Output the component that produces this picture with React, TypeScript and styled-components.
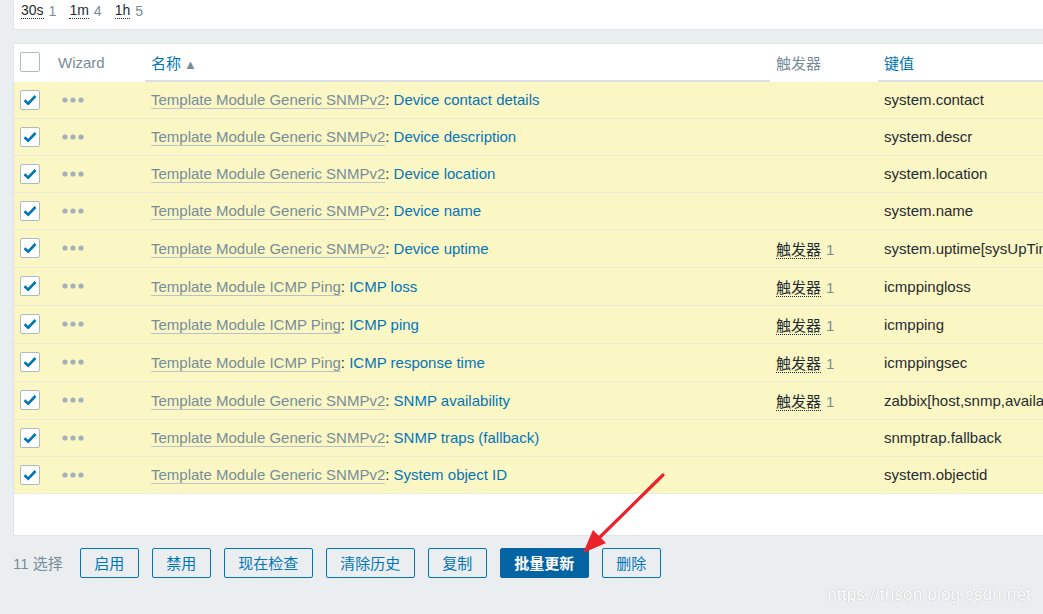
import styled, { createGlobalStyle } from 'styled-components';

const GlobalStyle = createGlobalStyle`
  html, body {
    margin: 0;
    padding: 0;
    background: #ebeef0;
  }
  body {
    font-family: "Liberation Sans", Arial, "Noto Sans CJK SC", sans-serif;
    font-size: 15px;
    color: #1f2c33;
  }
`;

type Item = {
  template: string;
  name: string;
  trigger?: number;
  key: string;
};

const items: Item[] = [
  { template: 'Template Module Generic SNMPv2', name: 'Device contact details', key: 'system.contact' },
  { template: 'Template Module Generic SNMPv2', name: 'Device description', key: 'system.descr' },
  { template: 'Template Module Generic SNMPv2', name: 'Device location', key: 'system.location' },
  { template: 'Template Module Generic SNMPv2', name: 'Device name', key: 'system.name' },
  { template: 'Template Module Generic SNMPv2', name: 'Device uptime', trigger: 1, key: 'system.uptime[sysUpTime.0]' },
  { template: 'Template Module ICMP Ping', name: 'ICMP loss', trigger: 1, key: 'icmppingloss' },
  { template: 'Template Module ICMP Ping', name: 'ICMP ping', trigger: 1, key: 'icmpping' },
  { template: 'Template Module ICMP Ping', name: 'ICMP response time', trigger: 1, key: 'icmppingsec' },
  { template: 'Template Module Generic SNMPv2', name: 'SNMP availability', trigger: 1, key: 'zabbix[host,snmp,available]' },
  { template: 'Template Module Generic SNMPv2', name: 'SNMP traps (fallback)', key: 'snmptrap.fallback' },
  { template: 'Template Module Generic SNMPv2', name: 'System object ID', key: 'system.objectid' },
];

const actions = ['启用', '禁用', '现在检查', '清除历史', '复制', '批量更新', '删除'];

const CheckIcon = () => (
  <svg width="14" height="12" viewBox="0 0 14 12">
    <path d="M1.5 6.2 L5.2 9.6 L12.5 2" fill="none" stroke="#0275b8" strokeWidth="2.6" strokeLinejoin="miter" />
  </svg>
);

const DotsIcon = () => (
  <svg width="22" height="6" viewBox="0 0 22 6">
    <circle cx="3" cy="3" r="2.6" fill="#a4b0b7" />
    <circle cx="11" cy="3" r="2.6" fill="#a4b0b7" />
    <circle cx="19" cy="3" r="2.6" fill="#a4b0b7" />
  </svg>
);

const App = () => {
  return (
    <Page>
      <GlobalStyle />
      <FilterPanel>
        <TimeLink>30s</TimeLink>
        <Count>1</Count>
        <TimeLink>1m</TimeLink>
        <Count>4</Count>
        <TimeLink>1h</TimeLink>
        <Count>5</Count>
      </FilterPanel>

      <TablePanel>
        <ItemTable>
          <colgroup>
            <col style={{ width: 38 }} />
            <col style={{ width: 93 }} />
            <col style={{ width: 625 }} />
            <col style={{ width: 108 }} />
            <col />
          </colgroup>
          <thead>
            <tr>
              <HeadCell>
                <CheckBox />
              </HeadCell>
              <HeadCell>Wizard</HeadCell>
              <HeadCell $sortable>
                <HeadLink>名称</HeadLink>
                <SortArrow>▲</SortArrow>
              </HeadCell>
              <HeadCell>触发器</HeadCell>
              <HeadCell $sortable>
                <HeadLink>键值</HeadLink>
              </HeadCell>
            </tr>
          </thead>
          <tbody>
            {items.map((item) => (
              <Row key={item.name} $tall={!!item.trigger}>
                <Cell>
                  <CheckBox>
                    <CheckIcon />
                  </CheckBox>
                </Cell>
                <Cell>
                  <Dots>
                    <DotsIcon />
                  </Dots>
                </Cell>
                <Cell>
                  <TemplateLink>{item.template}</TemplateLink>
                  <Colon>: </Colon>
                  <ItemLink>{item.name}</ItemLink>
                </Cell>
                <Cell>
                  {item.trigger ? (
                    <>
                      <TriggerLink>触发器</TriggerLink>
                      <TriggerCount>{item.trigger}</TriggerCount>
                    </>
                  ) : null}
                </Cell>
                <KeyCell>{item.key}</KeyCell>
              </Row>
            ))}
          </tbody>
        </ItemTable>
      </TablePanel>

      <ActionBar>
        <Selected>11 选择</Selected>
        {actions.map((label) => (
          <ActionButton key={label} $primary={label === '批量更新'}>
            {label}
          </ActionButton>
        ))}
      </ActionBar>

      <Annotation width="1043" height="614" viewBox="0 0 1043 614">
        <line x1="663" y1="475" x2="597" y2="540" stroke="#e8232b" strokeWidth="3.2" strokeLinecap="round" />
        <polygon points="583,553 593,530 606,543" fill="#e8232b" />
      </Annotation>

      <Watermark>https://thson.blog.csdn.net</Watermark>
    </Page>
  );
};

const Page = styled.div`
  position: relative;
  width: 1043px;
  height: 614px;
  overflow: hidden;
  padding-left: 13px;
  box-sizing: border-box;
  background: #ebeef0;
`;

const FilterPanel = styled.div`
  display: flex;
  align-items: center;
  width: 1100px;
  height: 30px;
  padding: 0 0 8px 7px;
  box-sizing: border-box;
  font-size: 14px;
  background: #fff;
  border-bottom: 1px solid #dfe4e7;
  border-left: 1px solid #dfe4e7;
`;

const TimeLink = styled.span`
  color: #1f2c33;
  border-bottom: 1px dotted #1f2c33;
  line-height: 15px;
`;

const Count = styled.span`
  color: #768d99;
  margin-left: 5px;
  margin-right: 13px;
`;

const TriggerCount = styled.span`
  color: #768d99;
  margin-left: 5px;
`;

const TablePanel = styled.div`
  width: 1100px;
  margin-top: 13px;
  padding-bottom: 41px;
  background: #fff;
  border: 1px solid #dfe4e7;
`;

const ItemTable = styled.table`
  width: 100%;
  table-layout: fixed;
  border-collapse: collapse;
`;

const HeadCell = styled.th<{ $sortable?: boolean }>`
  height: 36px;
  padding: 0 6px;
  text-align: left;
  font-weight: normal;
  color: #768d99;
  white-space: nowrap;
  border-bottom: 2px solid ${(p) => (p.$sortable ? '#dcdfe4' : '#fff')};
  vertical-align: middle;
`;

const HeadLink = styled.span`
  color: #0275b8;
`;

const SortArrow = styled.span`
  margin-left: 3px;
  font-size: 13px;
  color: #768d99;
`;

const Row = styled.tr<{ $tall?: boolean }>`
  height: ${(p) => (p.$tall ? 38 : 37)}px;
  background: #fbf7c5;
  border-bottom: 1px solid #ecebd8;
`;

const Cell = styled.td`
  padding: 0 6px;
  white-space: nowrap;
  overflow: hidden;
  vertical-align: middle;
`;

const KeyCell = styled(Cell)`
  color: #1f2c33;
`;

const CheckBox = styled.span`
  display: flex;
  align-items: center;
  justify-content: center;
  width: 18px;
  height: 18px;
  border: 1px solid #acbbc2;
  border-radius: 2px;
  background: #fff;
`;

const Dots = styled.span`
  display: flex;
  align-items: center;
  padding-left: 4px;
`;

const TemplateLink = styled.span`
  color: #768d99;
  border-bottom: 1px solid #b9c2c7;
`;

const Colon = styled.span`
  color: #1f2c33;
  white-space: pre;
`;

const ItemLink = styled.span`
  color: #0275b8;
`;

const TriggerLink = styled.span`
  color: #1f2c33;
  border-bottom: 1px dotted #1f2c33;
`;

const ActionBar = styled.div`
  display: flex;
  align-items: center;
  gap: 13px;
  margin-top: 12px;
`;

const Selected = styled.span`
  color: #768d99;
  margin-right: 4px;
`;

const ActionButton = styled.button<{ $primary?: boolean }>`
  height: 30px;
  padding: 0 13.5px;
  font-family: "Liberation Sans", Arial, "Noto Sans CJK SC", sans-serif;
  font-size: 15px;
  border-radius: 2px;
  border: 1px solid ${(p) => (p.$primary ? '#0564a3' : '#0275b8')};
  background: ${(p) => (p.$primary ? '#0564a3' : 'transparent')};
  color: ${(p) => (p.$primary ? '#fff' : '#0275b8')};
  font-weight: ${(p) => (p.$primary ? 'bold' : 'normal')};
`;

const Annotation = styled.svg`
  position: absolute;
  left: 0;
  top: 0;
  pointer-events: none;
`;

const Watermark = styled.div`
  position: absolute;
  right: 12px;
  bottom: 9px;
  font-size: 17px;
  color: #fff;
  text-shadow: 0 0 1px #b8c0c5, 0 0 1px #b8c0c5;
  letter-spacing: 0.2px;
`;

export default App;
